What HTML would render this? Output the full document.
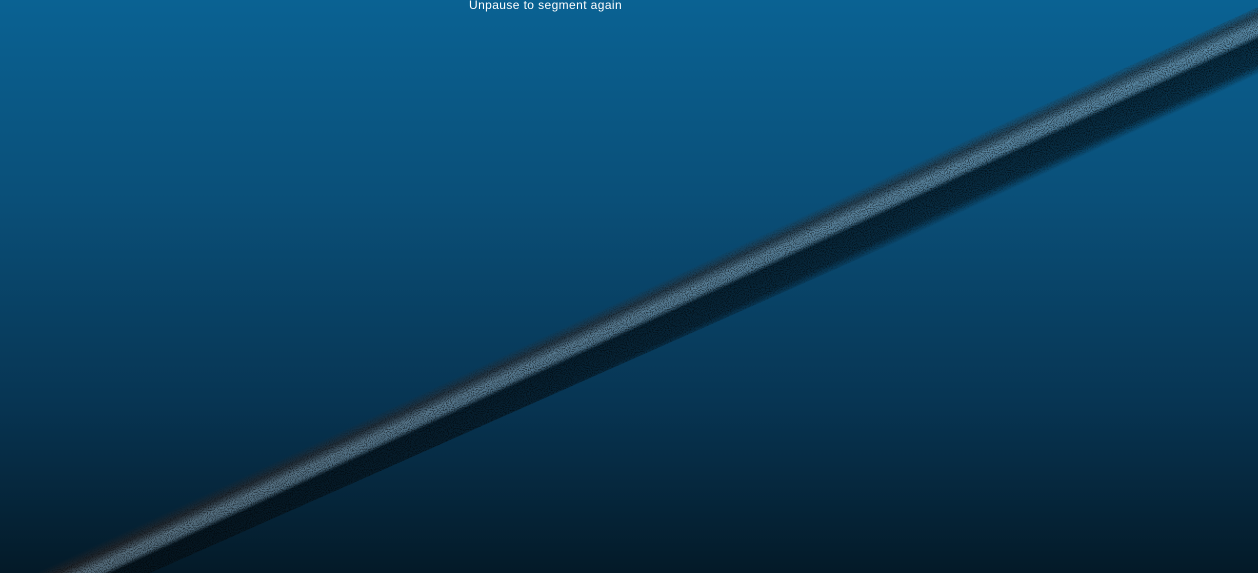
<!DOCTYPE html>
<html><head><style>
html,body{margin:0;padding:0;width:1258px;height:573px;overflow:hidden}
body{background:linear-gradient(#0a6293,#0a4f78 35%,#073553 70%,#041a28);position:relative;font-family:"Liberation Sans",sans-serif}
.t{position:absolute;left:469px;top:-2px;color:#fff;font-size:12px;letter-spacing:0.4px}
svg{position:absolute;left:0;top:0}
</style></head><body>
<svg width="1258" height="573">
<defs>
<linearGradient id="g" gradientUnits="userSpaceOnUse" x1="650" y1="287" x2="677" y2="345">
<stop offset="0" stop-color="#3a3030" stop-opacity="0"/>
<stop offset="0.15" stop-color="#3d3230" stop-opacity="0.5"/>
<stop offset="0.3" stop-color="#8ea6b6" stop-opacity="0.6"/>
<stop offset="0.42" stop-color="#7d98aa" stop-opacity="0.6"/>
<stop offset="0.5" stop-color="#06121a" stop-opacity="0.65"/>
<stop offset="0.85" stop-color="#06121a" stop-opacity="0.55"/>
<stop offset="1" stop-color="#06121a" stop-opacity="0"/>
</linearGradient>
<filter id="n"><feTurbulence type="fractalNoise" baseFrequency="0.95" numOctaves="1" seed="3"/><feColorMatrix values="0 0 0 0 0 0 0 0 0 0 0 0 0 0 0 0 0 0 -4 2.2"/><feComposite in2="SourceGraphic" operator="in"/></filter>
</defs>
<polygon points="20,573 1258,7 1258,82 150,573" fill="url(#g)"/>
<polygon points="20,573 1258,7 1258,82 150,573" fill="url(#g)" filter="url(#n)"/>
</svg>
<div class="t">Unpause to segment again</div>
</body></html>
